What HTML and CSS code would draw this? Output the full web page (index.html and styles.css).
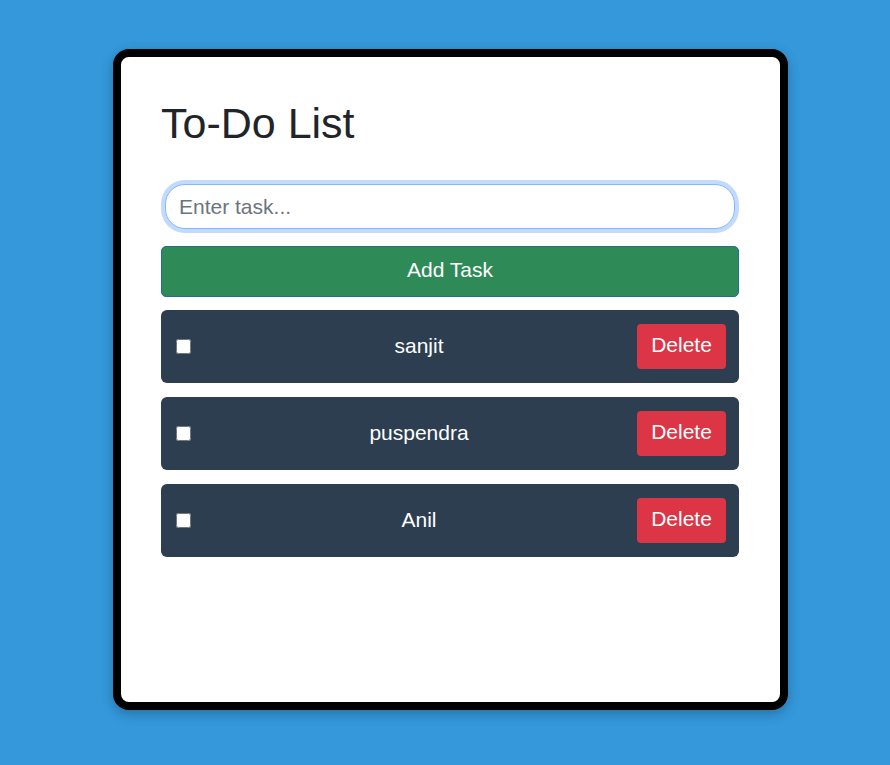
FILE: index.html
```html
<!DOCTYPE html>
<html>
<head>
<meta charset="utf-8">
<link rel="stylesheet" href="styles.css">
</head>
<body>
<div class="card">
  <h1 class="title">To-Do List</h1>
  <div class="input-wrap"><input class="task-input" type="text" placeholder="Enter task..."></div>
  <button class="add-btn">Add Task</button>
  <ul class="list">
    <li class="item"><input class="check" type="checkbox"><span class="text">sanjit</span><button class="del">Delete</button></li>
    <li class="item"><input class="check" type="checkbox"><span class="text">puspendra</span><button class="del">Delete</button></li>
    <li class="item"><input class="check" type="checkbox"><span class="text">Anil</span><button class="del">Delete</button></li>
  </ul>
</div>
</body>
</html>
```
FILE: styles.css
```css
html, body {
  margin: 0;
  padding: 0;
}
body {
  background: #3498db;
  font-family: "Liberation Sans", Arial, sans-serif;
  height: 765px;
  overflow: hidden;
}
.card {
  box-sizing: border-box;
  width: 675px;
  height: 661px;
  margin: 49px 0 0 113px;
  background: #fff;
  border: 8px solid #000;
  border-radius: 16px;
  padding: 40px 41px 40px 40px;
  box-shadow: 0 4px 12px rgba(0, 0, 0, 0.25);
}
.title {
  margin: 0 0 33px 0;
  font-size: 43px;
  font-weight: 400;
  line-height: 48px;
  color: #212529;
  padding-top: 2px;
}
.input-wrap {
  padding: 4px;
}
.task-input {
  display: block;
  box-sizing: border-box;
  width: 100%;
  height: 45px;
  margin: 0;
  padding: 0 13px;
  font-family: inherit;
  font-size: 21px;
  color: #212529;
  border: 1px solid #86b7fe;
  border-radius: 20px;
  outline: none;
  box-shadow: 0 0 0 4px #c2dbfd;
}
.task-input::placeholder {
  color: #6c757d;
}
.add-btn {
  display: block;
  box-sizing: border-box;
  width: 100%;
  height: 51px;
  margin: 13px 0 13px 0;
  background: #2e8b57;
  color: #fff;
  border: 1px solid #1f6f9a;
  border-radius: 5px;
  font-family: inherit;
  font-size: 21px;
  padding: 0 0 4px 0;
}
.list {
  list-style: none;
  margin: 0;
  padding: 0;
  display: flex;
  flex-direction: column;
  gap: 14px;
}
.item {
  display: flex;
  align-items: center;
  background: #2c3e50;
  border-radius: 6px;
  padding: 14px 13px 14px 15px;
  color: #fff;
}
.check {
  width: 15px;
  height: 15px;
  margin: 0;
}
.text {
  flex: 1;
  text-align: center;
  font-size: 21px;
  margin-left: 10px;
  padding-bottom: 2px;
}
.del {
  box-sizing: border-box;
  width: 89px;
  height: 45px;
  background: #dc3545;
  color: #fff;
  border: none;
  border-radius: 4px;
  font-family: inherit;
  font-size: 21px;
  padding: 0 0 3px 0;
}
```
